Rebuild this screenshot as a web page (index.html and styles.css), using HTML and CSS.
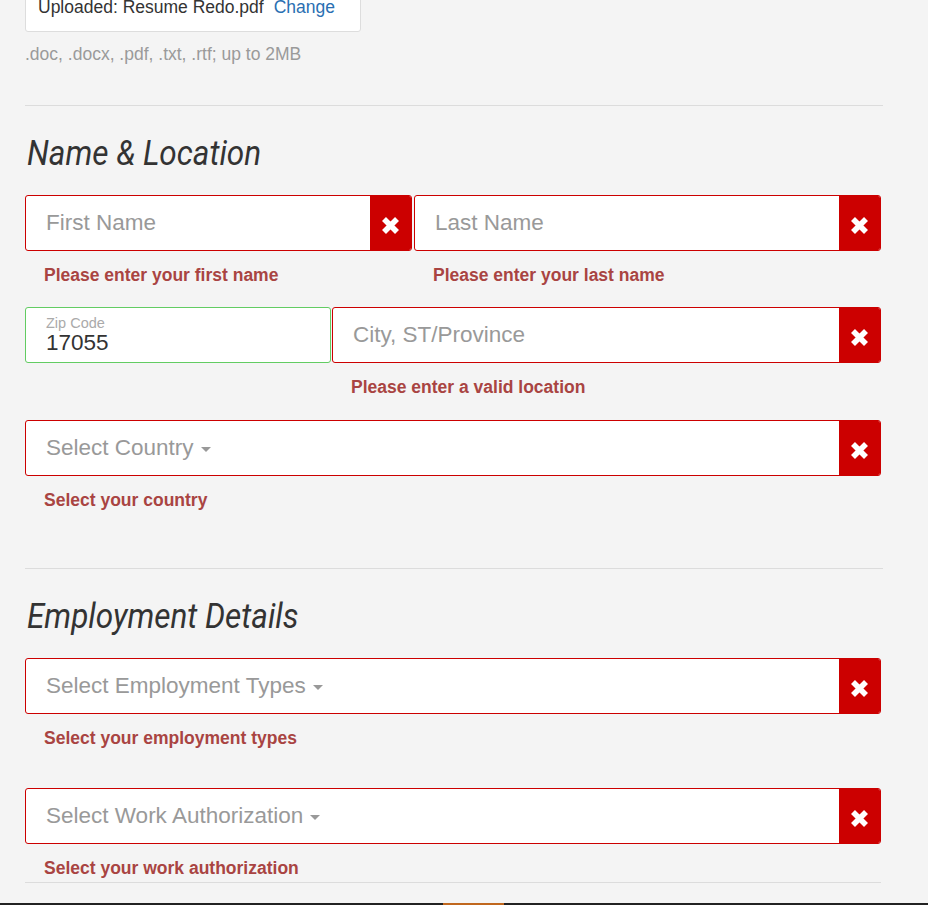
FILE: index.html
```html
<!DOCTYPE html>
<html lang="en">
<head>
<meta charset="utf-8">
<title>Application form</title>
<link rel="stylesheet" href="styles.css">
</head>
<body>
<div class="page">
  <div class="upload-card">
    <span class="upload-name">Uploaded: Resume Redo.pdf</span><a class="upload-link" href="#">Change</a>
  </div>
  <p class="help">.doc, .docx, .pdf, .txt, .rtf; up to 2MB</p>

  <hr class="divider">

  <h2 class="section-title"><span class="section-title-text">Name &amp; Location</span></h2>

  <div class="row">
    <div class="group group-first">
      <div class="field is-error">
        <span class="field-text">First Name</span>
        <span class="err-icon"><svg width="19" height="19" viewBox="0 0 19 19"><path d="M3 3L16 16M16 3L3 16" stroke="#fff" stroke-width="5.6"/></svg></span>
      </div>
      <p class="error">Please enter your first name</p>
    </div>
    <div class="group group-fill">
      <div class="field is-error">
        <span class="field-text">Last Name</span>
        <span class="err-icon"><svg width="19" height="19" viewBox="0 0 19 19"><path d="M3 3L16 16M16 3L3 16" stroke="#fff" stroke-width="5.6"/></svg></span>
      </div>
      <p class="error">Please enter your last name</p>
    </div>
  </div>

  <div class="row row-tight">
    <div class="group group-zip">
      <div class="field is-valid">
        <div class="zip-inner">
          <span class="zip-label">Zip Code</span>
          <span class="zip-value">17055</span>
        </div>
      </div>
    </div>
    <div class="group group-fill">
      <div class="field is-error">
        <span class="field-text">City, ST/Province</span>
        <span class="err-icon"><svg width="19" height="19" viewBox="0 0 19 19"><path d="M3 3L16 16M16 3L3 16" stroke="#fff" stroke-width="5.6"/></svg></span>
      </div>
      <p class="error">Please enter a valid location</p>
    </div>
  </div>

  <div class="group">
    <div class="field is-error">
      <span class="field-text">Select Country<span class="caret"></span></span>
      <span class="err-icon"><svg width="19" height="19" viewBox="0 0 19 19"><path d="M3 3L16 16M16 3L3 16" stroke="#fff" stroke-width="5.6"/></svg></span>
    </div>
    <p class="error">Select your country</p>
  </div>

  <hr class="divider divider-second">

  <h2 class="section-title"><span class="section-title-text">Employment Details</span></h2>

  <div class="group group-spaced">
    <div class="field is-error">
      <span class="field-text">Select Employment Types<span class="caret"></span></span>
      <span class="err-icon"><svg width="19" height="19" viewBox="0 0 19 19"><path d="M3 3L16 16M16 3L3 16" stroke="#fff" stroke-width="5.6"/></svg></span>
    </div>
    <p class="error">Select your employment types</p>
  </div>

  <div class="group group-last">
    <div class="field is-error">
      <span class="field-text">Select Work Authorization<span class="caret"></span></span>
      <span class="err-icon"><svg width="19" height="19" viewBox="0 0 19 19"><path d="M3 3L16 16M16 3L3 16" stroke="#fff" stroke-width="5.6"/></svg></span>
    </div>
    <p class="error">Select your work authorization</p>
  </div>

  <hr class="divider divider-end">
</div>

<div class="footer-bar"><span class="footer-accent"></span></div>
</body>
</html>
```

FILE: styles.css
```css
html, body {
  margin: 0;
  padding: 0;
  background: #f4f4f4;
}

body {
  font-family: "Liberation Sans", Arial, sans-serif;
  font-size: 17.5px;
  color: #333;
}

.page {
  width: 858px;
  padding-left: 25px;
}

.upload-card {
  width: 336px;
  box-sizing: border-box;
  margin-top: -16px;
  padding: 12px 12px 14px;
  background: #fff;
  border: 1px solid #dddddd;
  border-radius: 3px;
  line-height: 20px;
  color: #333;
}

.upload-link {
  margin-left: 10px;
  color: #2a6fb2;
  text-decoration: none;
}

.help {
  margin: 12px 0 0;
  line-height: 20px;
  color: #9a9a9a;
}

.divider {
  margin: 41px 0 0;
  border: 0;
  border-top: 1px solid #dcdcdc;
  height: 0;
}

.divider-second {
  margin-top: 58px;
}

.divider-end {
  width: 856px;
  margin: 4px 0 0;
}

.section-title {
  margin: 28px 0 21px;
  padding-left: 2px;
  font-family: Roboto, "Liberation Sans", sans-serif;
  font-style: italic;
  font-weight: 400;
  font-size: 35px;
  line-height: 40px;
  color: #333;
}

.section-title-text {
  display: inline-block;
  transform: scaleX(0.9);
  transform-origin: left center;
}

.row {
  display: flex;
  gap: 2px;
  width: 856px;
}

.row-tight {
  gap: 1px;
  margin-bottom: 1px;
}

.group {
  width: 856px;
  margin-bottom: 22px;
}

.row .group {
  width: auto;
}

.group-first {
  width: 387px !important;
  flex: none;
}

.group-zip {
  width: 306px !important;
  flex: none;
}

.group-fill {
  flex: 1;
}

.group-spaced {
  margin-bottom: 40px;
}

.group-last {
  margin-bottom: 0;
}

.field {
  display: flex;
  align-items: stretch;
  height: 56px;
  box-sizing: border-box;
  background: #fff;
  border: 1px solid #cc0000;
  border-radius: 3px;
  overflow: hidden;
}

.field.is-valid {
  border-color: #62cc62;
}

.field-text {
  flex: 1;
  display: flex;
  align-items: center;
  padding-left: 20px;
  padding-bottom: 1px;
  font-size: 22.5px;
  color: #999;
}

.caret {
  display: inline-block;
  width: 0;
  height: 0;
  margin-left: 7px;
  margin-top: 3px;
  border-top: 5px solid #999;
  border-left: 5px solid transparent;
  border-right: 5px solid transparent;
}

.err-icon {
  width: 41px;
  flex: none;
  display: flex;
  align-items: center;
  justify-content: center;
  padding-top: 5px;
  box-sizing: border-box;
  background: #cc0000;
}

.zip-inner {
  display: flex;
  flex-direction: column;
  padding: 7px 0 0 20px;
}

.zip-label {
  font-size: 14.5px;
  line-height: 16px;
  color: #aaa;
}

.zip-value {
  font-size: 22.5px;
  line-height: 24px;
  color: #333;
}

.error {
  margin: 14px 0 0 19px;
  font-weight: bold;
  font-size: 17.5px;
  line-height: 20px;
  color: #a94442;
}

.footer-bar {
  position: fixed;
  left: 0;
  right: 0;
  bottom: 0;
  height: 2px;
  background: #222;
}

.footer-accent {
  position: absolute;
  left: 443px;
  top: 0;
  width: 61px;
  height: 2px;
  background: #c0671e;
}
```
